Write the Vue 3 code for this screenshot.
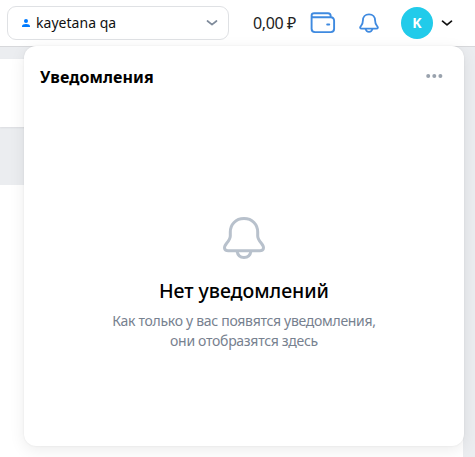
<script setup>
const lines = ['Как только у вас появятся уведомления,', 'они отобразятся здесь']
</script>

<template>
  <div class="page">
    <header class="topbar">
      <button class="account">
        <svg class="person" width="8" height="9" viewBox="0 0 8 9"><circle cx="4" cy="2.1" r="2" fill="#007bff" /><path d="M0 8.1V7.4C0 5.8 1.5 5.1 4 5.1s4 .7 4 2.3v.7z" fill="#007bff" /></svg>
        <span class="account-name">kayetana qa</span>
        <svg class="chevron" width="12" height="8" viewBox="0 0 12 8" fill="none" stroke="#7f8b9b" stroke-width="1.7" stroke-linecap="round" stroke-linejoin="round"><path d="M1.5 2 6 5.600l4.500-3.600" /></svg>
      </button>
      <span class="balance">0,00 ₽</span>
      <svg class="wallet" width="26" height="22" viewBox="0 0 26 22" fill="none" stroke="#3f8ae0" stroke-width="1.9" stroke-linejoin="round" stroke-linecap="round">
        <path d="M20.700 5.200V4Q20.700 1.200 18 1.200H4.100Q1.600 1.200 1.600 3.600V16.700Q1.600 20.100 5 20.100H20.700Q24.100 20.100 24.100 16.700V8.700Q24.100 5.200 20.700 5.200H3.600Q1.600 5.200 1.600 3.400" />
        <path d="M17.200 12.600h2" stroke-width="2" />
      </svg>
      <svg class="bell" width="20" height="20" viewBox="0 0 44 44" fill="none" stroke="#3f8ae0" stroke-width="4" stroke-linejoin="round">
        <path d="M22 3C13.600 3 8.500 9 8.500 17C8.500 23 7.500 25 4.500 28.300C1 32 2.500 34.500 6 34.500H38C41.500 34.500 43 32 39.500 28.300C36.500 25 35.500 23 35.500 17C35.500 9 30.400 3 22 3Z" />
        <path d="M14.500 35C15.500 39.500 18.500 41.500 22 41.500S28.500 39.500 29.500 35" />
      </svg>
      <span class="avatar">K</span>
      <svg class="user-chevron" width="12" height="8" viewBox="0 0 12 8" fill="none" stroke="#111" stroke-width="1.700" stroke-linecap="round" stroke-linejoin="round"><path d="M1.500 2.200 6 5.800l4.500-3.600" /></svg>
    </header>
    <main class="backdrop">
      <div class="strip"></div>
      <div class="sheet"></div>
    </main>
    <section class="panel">
      <div class="panel-head">
        <h2>Уведомления</h2>
        <svg width="17" height="4" viewBox="0 0 17 4" fill="#99a2ad"><circle cx="2.200" cy="2" r="2" /><circle cx="8.300" cy="2" r="2" /><circle cx="14.400" cy="2" r="2" /></svg>
      </div>
      <div class="empty">
        <svg width="44" height="44" viewBox="0 0 44 44" fill="none" stroke="#b8c1cc" stroke-width="3" stroke-linejoin="round">
          <path d="M22 2.500C13.700 2.500 8.300 8.500 8.300 16V20C8.300 23 7 24.500 4.500 27.500C1 31.800 2.500 34.700 6.200 34.700H37.800C41.500 34.700 43 31.800 39.500 27.500C37 24.500 35.700 23 35.700 20V16C35.700 8.500 30.300 2.500 22 2.500Z" />
          <path d="M15 35C15.700 39.300 18.300 41.500 22 41.500S28.300 39.300 29 35" />
        </svg>
        <h3>Нет уведомлений</h3>
        <p><span v-for="(line, i) in lines" :key="i">{{ line }}</span></p>
      </div>
    </section>
  </div>
</template>

<style>
body { overflow: hidden; }
</style>

<style scoped>
* { box-sizing: border-box; margin: 0; }
.page { position: relative; width: 475px; height: 457px; overflow: hidden; background: #ebedf0; font-family: "Noto Sans", "Open Sans", sans-serif; color: #000; white-space: nowrap; }
.topbar { height: 46px; display: flex; align-items: center; padding-left: 7px; background: #fff; }
.account { width: 222px; height: 34px; display: flex; align-items: center; border: 1px solid #dfe1e4; border-radius: 9px; background: #fff; padding: 0 10px 0 14px; font: inherit; color: #111; }
.person { margin-top: 1px; }
.account-name { margin: -2px 0 0 6px; font-size: 14px; letter-spacing: .03px; }
.chevron { margin-left: auto; }
.balance { width: 46px; margin: -1px 0 0 24px; font-size: 16px; letter-spacing: -.4px; color: #222; }
.wallet { margin-left: 11px; }
.bell { margin: -1px 0 0 23px; }
.avatar { width: 32px; height: 32px; margin-left: 22px; border-radius: 50%; display: grid; place-items: center; background: #21cbea; color: #fff; font-size: 14px; font-weight: 700; line-height: 30px; }
.user-chevron { margin-left: 8px; }
.backdrop { height: 411px; border-top: 1px solid #d7d8db; padding-top: 12px; }
.strip { width: 463px; height: 68px; background: #fff; box-shadow: 0 1px 2px #d9dbdf; }
.sheet { width: 463px; height: 272px; margin-top: 58px; background: #fff; }
.panel { position: absolute; left: 24px; top: 46px; width: 440px; height: 400px; border-radius: 12px; background: #fff; box-shadow: 0 0 2px rgba(0,0,0,.08), 0 4px 16px rgba(0,0,0,.08); }
.panel-head { height: 60px; padding: 0 21px 0 16px; display: flex; align-items: center; justify-content: space-between; }
h2 { font-size: 16px; font-weight: 700; line-height: 22px; letter-spacing: .1px; padding-top: 1px; }
.empty { display: flex; flex-direction: column; align-items: center; padding-top: 110px; }
h3 { margin-top: 18px; font-size: 19.500px; font-weight: 500; line-height: 26px; letter-spacing: -.05px; }
p { margin-top: 7px; font-size: 14px; line-height: 20px; color: #77818f; text-align: center; }
p span { display: block; letter-spacing: -.3px; }
</style>
